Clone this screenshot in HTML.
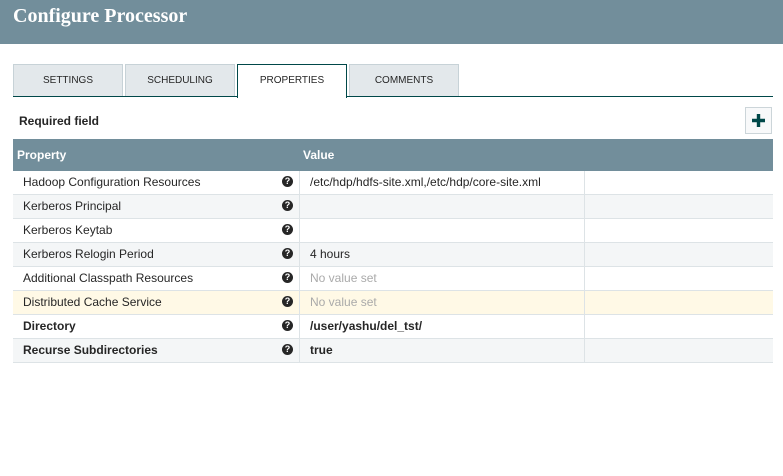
<!DOCTYPE html><html><head><style>
body{margin:0;width:783px;height:476px;background:#fff;font-family:"Liberation Sans",sans-serif;position:relative;overflow:hidden}
.hdr{position:absolute;left:0;top:0;width:783px;height:44px;background:#728e9b}
.hdr span{position:absolute;left:13px;top:5px;color:#fff;font-family:"Liberation Serif",serif;font-weight:bold;font-size:20px}
.tab{position:absolute;top:64px;height:32px;width:110px;background:#e3e8eb;border:1px solid #c7d2d7;border-bottom:none;font-size:10px;color:#262626;text-align:center;line-height:32px;box-sizing:border-box}
.tab.a{background:#fff;border:1px solid #004849;border-bottom:none;height:34px}
.line{position:absolute;left:13px;top:96px;width:760px;height:1px;background:#004849}
.req{position:absolute;left:19px;top:114px;font-size:12px;font-weight:bold;color:#262626}
.plus{position:absolute;left:745px;top:107px;width:27px;height:27px;border:1px solid #ccd5d9;background:#f8f9fa;box-sizing:border-box}
.th{position:absolute;left:13px;top:139px;width:760px;height:32px;background:#728e9b;color:#fff;font-weight:bold;font-size:12px}
.row{position:absolute;left:13px;width:760px;height:24px;border-bottom:1px solid #dde3e6;box-sizing:border-box;font-size:12px;color:#262626}
.row .p{position:absolute;left:10px;top:4px}
.row .v{position:absolute;left:297px;top:4px}
.row .q{position:absolute;left:269px;top:5px;width:11px;height:11px;border-radius:50%;background:#262626;color:#fff;font-size:9px;font-weight:bold;text-align:center;line-height:11px}
.row .s1{position:absolute;left:286px;top:0;width:1px;height:24px;background:#dde3e6}
.row .s2{position:absolute;left:571px;top:0;width:1px;height:24px;background:#dde3e6}
.g{background:#f4f6f7}.y{background:#fff9e6}.b{font-weight:bold}.n{color:#aaa}
</style></head><body>
<div class="hdr"><span>Configure Processor</span></div>
<div class="tab" style="left:13px">SETTINGS</div>
<div class="tab" style="left:125px">SCHEDULING</div>
<div class="tab a" style="left:237px;width:110px">PROPERTIES</div>
<div class="tab" style="left:349px;width:110px">COMMENTS</div>
<div class="line"></div>
<div class="line" style="left:238px;width:108px;background:#fff"></div>
<div class="req">Required field</div>
<div class="plus"><svg width="25" height="25" viewBox="0 0 25 25"><path d="M12.5 6v13M6 12.5h13" stroke="#004849" stroke-width="3.4"/></svg></div>
<div class="th"><span style="position:absolute;left:4px;top:9px">Property</span><span style="position:absolute;left:290px;top:9px">Value</span></div>
<div class="row" style="top:171px"><span class="p">Hadoop Configuration Resources</span><span class="q">?</span><i class="s1"></i><span class="v">/etc/hdp/hdfs-site.xml,/etc/hdp/core-site.xml</span><i class="s2"></i></div>
<div class="row g" style="top:195px"><span class="p">Kerberos Principal</span><span class="q">?</span><i class="s1"></i><i class="s2"></i></div>
<div class="row" style="top:219px"><span class="p">Kerberos Keytab</span><span class="q">?</span><i class="s1"></i><i class="s2"></i></div>
<div class="row g" style="top:243px"><span class="p">Kerberos Relogin Period</span><span class="q">?</span><i class="s1"></i><span class="v">4 hours</span><i class="s2"></i></div>
<div class="row" style="top:267px"><span class="p">Additional Classpath Resources</span><span class="q">?</span><i class="s1"></i><span class="v n">No value set</span><i class="s2"></i></div>
<div class="row y" style="top:291px"><span class="p">Distributed Cache Service</span><span class="q">?</span><i class="s1"></i><span class="v n">No value set</span><i class="s2"></i></div>
<div class="row b" style="top:315px"><span class="p">Directory</span><span class="q">?</span><i class="s1"></i><span class="v">/user/yashu/del_tst/</span><i class="s2"></i></div>
<div class="row g b" style="top:339px"><span class="p">Recurse Subdirectories</span><span class="q">?</span><i class="s1"></i><span class="v">true</span><i class="s2"></i></div>
</body></html>
